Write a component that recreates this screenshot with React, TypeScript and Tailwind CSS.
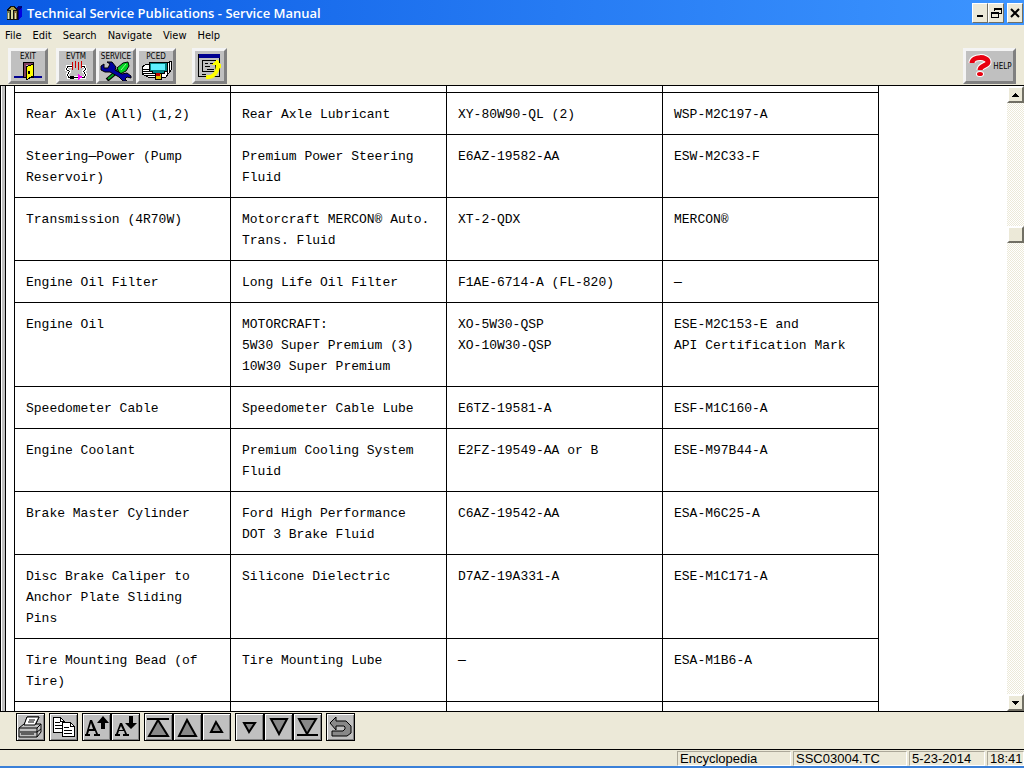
import type { ReactNode } from "react";
import clsx from "clsx";

type Row = [string[], string[], string[], string[]];

const rows: Row[] = [
  [["Rear Axle (All) (1,2)"], ["Rear Axle Lubricant"], ["XY-80W90-QL (2)"], ["WSP-M2C197-A"]],
  [["Steering—Power (Pump", "Reservoir)"], ["Premium Power Steering", "Fluid"], ["E6AZ-19582-AA"], ["ESW-M2C33-F"]],
  [["Transmission (4R70W)"], ["Motorcraft MERCON® Auto.", "Trans. Fluid"], ["XT-2-QDX"], ["MERCON®"]],
  [["Engine Oil Filter"], ["Long Life Oil Filter"], ["F1AE-6714-A (FL-820)"], ["—"]],
  [
    ["Engine Oil"],
    ["MOTORCRAFT:", "5W30 Super Premium (3)", "10W30 Super Premium"],
    ["XO-5W30-QSP", "XO-10W30-QSP"],
    ["ESE-M2C153-E and", "API Certification Mark"],
  ],
  [["Speedometer Cable"], ["Speedometer Cable Lube"], ["E6TZ-19581-A"], ["ESF-M1C160-A"]],
  [["Engine Coolant"], ["Premium Cooling System", "Fluid"], ["E2FZ-19549-AA or B"], ["ESE-M97B44-A"]],
  [["Brake Master Cylinder"], ["Ford High Performance", "DOT 3 Brake Fluid"], ["C6AZ-19542-AA"], ["ESA-M6C25-A"]],
  [["Disc Brake Caliper to", "Anchor Plate Sliding", "Pins"], ["Silicone Dielectric"], ["D7AZ-19A331-A"], ["ESE-M1C171-A"]],
  [["Tire Mounting Bead (of", "Tire)"], ["Tire Mounting Lube"], ["—"], ["ESA-M1B6-A"]],
];

const menus = ["File", "Edit", "Search", "Navigate", "View", "Help"];

const bevel =
  "border-2 border-t-white border-l-white border-r-[#716f64] border-b-[#716f64] bg-[#ece9d8]";

const WindowButton = ({ label, children }: { label: string; children: ReactNode }) => (
  <button aria-label={label} className="flex h-5 w-4 items-center justify-center border border-t-white border-l-white border-r-[#716f64] border-b-[#716f64] bg-[#ece9d8]">
    <svg width="12" height="14" viewBox="0 0 12 14" shapeRendering="crispEdges" fill="none" stroke="#000">
      {children}
    </svg>
  </button>
);

const ToolButton = ({ label, caption, className, children }: { label: string; caption?: string; className?: string; children: ReactNode }) => (
  <button
    aria-label={label}
    className={clsx(
      "flex h-9 flex-col items-center border-[3px] border-t-[#f4f4f4] border-l-[#f4f4f4] border-r-[#808080] border-b-[#808080] bg-[#c0c0c0]",
      className ?? "w-10",
    )}
  >
    {caption && <span className="mt-px text-[8px] leading-[9px]">{caption}</span>}
    {children}
  </button>
);

const NavButton = ({ label, children }: { label: string; children: ReactNode }) => (
  <button
    aria-label={label}
    className="h-7 w-[29px] border border-black bg-[#c0c0c0] shadow-[inset_1px_1px_0_#fff,inset_-1px_-1px_0_#808080]"
  >
    <svg width="27" height="26" viewBox="0 0 27 26" fill="none" stroke="#000">
      {children}
    </svg>
  </button>
);

const AppIcon = () => (
  <svg width="17" height="16" viewBox="0 0 17 16" shapeRendering="crispEdges">
    <path d="M10 3l2-2h4v10l-3 4h-3z" fill="#000070" />
    <path d="M13 5l3-3v9l-3 3z" fill="#0000e0" />
    <path d="M0 5l4-4h5l3 4v10H1V6z" fill="#101010" />
    <path d="M2 5l3-3h3l2 3z" fill="#b0a040" />
    <path d="M1 6h3v8H1z" fill="#707850" />
    <path d="M5 5h2v9H5z" fill="#d8d8a0" />
    <path d="M8 6h3v8H8z" fill="#8a7440" />
    <path d="M2 8h1v6H2zM9 8h1v6H9z" fill="#e0e0c0" />
  </svg>
);

const ExitIcon = () => (
  <svg width="32" height="20" viewBox="0 0 32 20" shapeRendering="crispEdges">
    <path d="M2 15h28v2H2z" fill="#000090" />
    <path d="M11 1h11v16H11z" fill="#000" />
    <path d="M12 2h9v14h-9z" fill="#804060" />
    <path d="M14 4h6v12h-6z" fill="#c0c0c0" />
    <path d="M14 6l7-3v12l-7 4z" fill="#ffff00" stroke="#000" />
    <path d="M16 10h2v3h-2z" fill="#000" />
  </svg>
);

const EvtmIcon = () => (
  <svg width="32" height="20" viewBox="0 0 32 20" shapeRendering="crispEdges" fill="none">
    <path d="M12 5.500H7.500L6.500 8.500L9.500 10.500L7.500 13.500L8.500 16.500H24.500L25.500 13.500L23.500 10.500L25.500 8.500L24.500 5.500H21" stroke="#fff" strokeWidth="3" />
    <path d="M12 5.500H7.500L6.500 8.500L9.500 10.500L7.500 13.500L8.500 16.500H24.500L25.500 13.500L23.500 10.500L25.500 8.500L24.500 5.500H21" stroke="#000" />
    <path d="M12.500 1v8M15.500 0v7M18.500 1v8M21.500 0v7" stroke="#d00000" />
    <path d="M10 15h4v3h-4z" fill="#000" />
    <path d="M18 13l5 3-5 3z" fill="#ff00ff" />
  </svg>
);

const ServiceIcon = () => (
  <svg width="34" height="20" viewBox="0 0 34 20">
    <path d="M8 19l13-11" stroke="#000" strokeWidth="4" />
    <path d="M9 18l12-10" stroke="#00a020" strokeWidth="2" />
    <path d="M18 7l6-5 5-1 1 4-3 5-6 3z" fill="#00d020" stroke="#000" />
    <path d="M22 9l5-6" stroke="#90ff90" />
    <path d="M2 5l3-2 0 4h4l2-4-3-2h5l4 5-1 3 7 4 5-1 4 3v2l-4-1-2 2 2 2h-4l-4-4-9-5H6L2 9z" fill="#0000a0" stroke="#000" />
  </svg>
);

const PcedIcon = () => (
  <svg width="34" height="20" viewBox="0 0 34 20" shapeRendering="crispEdges">
    <path d="M3 6l5-3h20l4-3v9l-5 7H9l-6-3z" fill="#fff" stroke="#000" />
    <path d="M3 8h9M3 10h10M4 12h12M6 14h11M28 3v10M30 2v8" stroke="#000" fill="none" />
    <path d="M10 1h18v9h-3v2H13v-2h-3z" fill="#008080" stroke="#000" />
    <path d="M12 3h14v6H12z" fill="#60f0ff" />
    <path d="M16 12h6v6h-6z" fill="#e0c000" stroke="#000" />
    <path d="M17 12h4v3h-4z" fill="#c00000" />
  </svg>
);

const PageIcon = () => (
  <svg width="29" height="30" viewBox="0 0 29 30" shapeRendering="crispEdges" fill="none">
    <path d="M3.500 3.500h21v22h-21z" fill="#c0c0c0" stroke="#000" />
    <path d="M4 3h21v4H4z" fill="#000090" />
    <path d="M7.500 9.500h13v11h-13zM10 12.500h3M15 12.500h4M10 15.500h5M12 18.500h7M7 23.500h4" stroke="#000" />
    <path d="M11 26c7 1 12-4 12-13" stroke="#ffff00" strokeWidth="4" shapeRendering="auto" />
    <path d="M17 14l5-6 4 6v3h-3l-1-3z" fill="#ffff00" />
  </svg>
);

// printer, copy, font bigger / smaller, page movement, back
const PrinterIcon = () => (
  <>
    <path d="M7 12l3-9h12l-4 9z" fill="#fff" />
    <path d="M11 6h7M10 8h7" />
    <path d="M2 14l5-4h17v8l-4 5H2z" fill="#c0c0c0" />
    <path d="M7 11l3-8h12l-4 8z" fill="#fff" />
    <path d="M12 6h6M11 8h6" />
    <path d="M2 14h18l4-4M20 14v9M3 18h17l4-3M4 20h13" />
  </>
);

const CopyIcon = () => (
  <g shapeRendering="crispEdges">
    <path d="M3.500 3.500h7l4 4v11h-11z" fill="#fff" />
    <path d="M10.500 3.500v4h4M5 8.500h5M5 11.500h7M5 14.500h7" />
    <path d="M12.500 8.500h8l4 4v10h-12z" fill="#fff" />
    <path d="M20.500 8.500v4h4M14 13.500h5M14 16.500h8M14 19.500h8" />
  </g>
);

const FontLargerIcon = () => (
  <>
    <path d="M7 6h2l6 14h2v2h-6v-2h2l-1-3H6l-1 3h2v2H2v-2h1zM8 9l-2 6h4z" fill="#000" stroke="none" />
    <path d="M20 2l6 7h-4v6h-4V9h-4z" fill="#000" stroke="none" />
  </>
);

const FontSmallerIcon = () => (
  <>
    <path d="M8 9h2l5 11h2v2h-6v-2h2l-1-3H7l-1 3h2v2H3v-2h1zM9 12l-2 4h4z" fill="#000" stroke="none" />
    <path d="M19 15l6-6h-4V2h-4v7h-4z" fill="#000" stroke="none" />
  </>
);

const BackIcon = () => (
  <path d="M3 9l6-6v4h10l5 5v7l-4 3H5v-5h11l2-2v-2l-1-1H9v4z" fill="#888" />
);

const ScrollArrow = ({ label, d }: { label: string; d: string }) => (
  <button aria-label={label} className={clsx("flex size-[17px] shrink-0 items-center justify-center", bevel)}>
    <svg width="7" height="4" viewBox="0 0 7 4" shapeRendering="crispEdges">
      <path d={d} />
    </svg>
  </button>
);

const StatusField = ({ className, children }: { className: string; children: ReactNode }) => (
  <span className={clsx("border border-t-[#aca899] border-l-[#aca899] border-r-white border-b-white pl-0.5", className)}>
    {children}
  </span>
);

const TitleBar = () => (
  <header className="flex h-[25px] shrink-0 items-center bg-linear-to-r from-[#0a5ae4] to-[#3d95ff] pl-1.5 pr-px">
    <AppIcon />
    <h1 className="ml-1 flex-1 font-['Open_Sans',sans-serif] text-[13px] leading-4 font-semibold text-white">
      Technical Service Publications - Service Manual
    </h1>
    <div className="flex">
      <WindowButton label="Minimize">
        <path d="M3 10h6" strokeWidth="2" />
      </WindowButton>
      <WindowButton label="Restore">
        <path d="M4.500 5V2.500h7v5H9M4 3h8M1.500 6.500h7v5h-7zM1 7h8" />
      </WindowButton>
      <div className="ml-[3px] flex">
        <WindowButton label="Close">
          <path d="M2 3l8 8M10 3l-8 8" strokeWidth="2" shapeRendering="auto" />
        </WindowButton>
      </div>
    </div>
  </header>
);

const Toolbar = () => (
  <div className="flex h-10 shrink-0 items-start px-2 pt-[3px]" role="toolbar" aria-label="Main toolbar">
    <ToolButton label="Exit" caption="EXIT">
      <ExitIcon />
    </ToolButton>
    <div className="ml-2 flex">
      <ToolButton label="EVTM" caption="EVTM">
        <EvtmIcon />
      </ToolButton>
      <ToolButton label="Service" caption="SERVICE">
        <ServiceIcon />
      </ToolButton>
      <ToolButton label="PCED" caption="PCED">
        <PcedIcon />
      </ToolButton>
    </div>
    <ToolButton label="Page list" className="ml-4 w-[35px]">
      <PageIcon />
    </ToolButton>
    <ToolButton label="Help" className="ml-auto w-[53px]">
      <span className="flex h-full items-center gap-px">
        <svg width="25" height="24" viewBox="0 0 25 24" fill="none">
          <path d="M5 9c0-7 16-7 16-1 0 4-8 3-8 8" stroke="#fff" strokeWidth="7" />
          <ellipse cx="13" cy="20" rx="4" ry="3" fill="#fff" />
          <path d="M5 9c0-7 16-7 16-1 0 4-8 3-8 8" stroke="#e80010" strokeWidth="5" />
          <ellipse cx="13" cy="20" rx="3" ry="2" fill="#e80010" />
        </svg>
        <span className="text-[8px] leading-[9px]">HELP</span>
      </span>
    </ToolButton>
  </div>
);

const ManualTable = () => (
  <table className="w-full max-w-[865px] table-fixed border-collapse text-[13px] leading-[21px] font-['Liberation_Mono',monospace]">
    <tbody>
      <tr className="h-1.5">
        {[0, 1, 2, 3].map((i) => (
          <td key={i} className="border border-t-0 border-black" />
        ))}
      </tr>
      {rows.map((row) => (
        <tr key={row[0][0]}>
          {row.map((lines, i) => (
            <td key={i} className="border border-black px-[11px] pt-[11px] pb-[9px] align-top whitespace-nowrap">
              {lines.map((line) => (
                <div key={line}>{line}</div>
              ))}
            </td>
          ))}
        </tr>
      ))}
      <tr className="h-10">
        {[0, 1, 2, 3].map((i) => (
          <td key={i} className="border border-black" />
        ))}
      </tr>
    </tbody>
  </table>
);

const ScrollBar = () => (
  <div className="flex w-[17px] shrink-0 flex-col bg-[repeating-conic-gradient(#ece9d8_0_25%,#fff_0_50%)] bg-size-[2px_2px]">
    <ScrollArrow label="Scroll up" d="M3 0h1v1h1v1h1v1h1v1H0V3h1V2h1V1h1z" />
    <div className="grow-[123]" />
    <div className={clsx("h-[17px] shrink-0", bevel)} />
    <div className="grow-[451]" />
    <ScrollArrow label="Scroll down" d="M0 0h7v1H6v1H5v1H4v1H3V3H2V2H1V1H0z" />
  </div>
);

const BottomBar = () => (
  <div className="flex h-[37px] shrink-0 items-start gap-1 pt-px pl-4" role="toolbar" aria-label="Page toolbar">
    <NavButton label="Print">
      <PrinterIcon />
    </NavButton>
    <NavButton label="Copy">
      <CopyIcon />
    </NavButton>
    <div className="flex">
      <NavButton label="Larger text">
        <FontLargerIcon />
      </NavButton>
      <NavButton label="Smaller text">
        <FontSmallerIcon />
      </NavButton>
    </div>
    <div className="flex">
      <NavButton label="Top of document">
        <path d="M2 5h22" strokeWidth="2" />
        <path d="M13 6L4 22h19z" fill="#888" strokeWidth="2" />
      </NavButton>
      <NavButton label="Page up">
        <path d="M13 6L5 22h17z" fill="#888" strokeWidth="2" />
      </NavButton>
      <NavButton label="Line up">
        <path d="M13 8L8 18h11z" fill="#888" strokeWidth="2" />
      </NavButton>
    </div>
    <div className="flex">
      <NavButton label="Line down">
        <path d="M13 18L8 9h11z" fill="#888" strokeWidth="2" />
      </NavButton>
      <NavButton label="Page down">
        <path d="M14 20L6 5h16z" fill="#888" strokeWidth="2" />
      </NavButton>
      <NavButton label="End of document">
        <path d="M13 20L5 5h17z" fill="#888" strokeWidth="2" />
        <path d="M3 21h21" strokeWidth="2" />
      </NavButton>
    </div>
    <NavButton label="Back">
      <BackIcon />
    </NavButton>
  </div>
);

const App = () => {
  return (
    <div className="flex h-screen flex-col overflow-hidden bg-[#ece9d8] font-['DejaVu_Sans_Condensed','DejaVu_Sans',sans-serif] text-black">
      <TitleBar />

      <nav className="flex h-5 shrink-0 items-center gap-[11px] pt-px pl-[5px] text-[11px] leading-5" aria-label="Menu">
        {menus.map((menu) => (
          <button key={menu}>{menu}</button>
        ))}
      </nav>

      <Toolbar />

      <main className="flex min-h-0 flex-1 border-y border-black bg-white">
        <div className="mr-2 w-1.5 shrink-0 border-r border-l border-black bg-[#c0c0c0] shadow-[inset_1px_0_0_#fff]" />
        <div className="min-w-0 flex-1 overflow-hidden">
          <ManualTable />
        </div>
        <ScrollBar />
      </main>

      <BottomBar />

      <footer className="flex h-[19px] shrink-0 justify-end gap-0.5 border-t border-b-2 border-t-black border-b-[#3a80d8] pt-px font-['Liberation_Sans',Arial,sans-serif] text-[13px] leading-[14px]">
        <StatusField className="w-[114px]">Encyclopedia</StatusField>
        <StatusField className="w-[114px]">SSC03004.TC</StatusField>
        <StatusField className="w-[76px]">5-23-2014</StatusField>
        <StatusField className="w-[37px]">18:41</StatusField>
      </footer>
    </div>
  );
};

export default App;
